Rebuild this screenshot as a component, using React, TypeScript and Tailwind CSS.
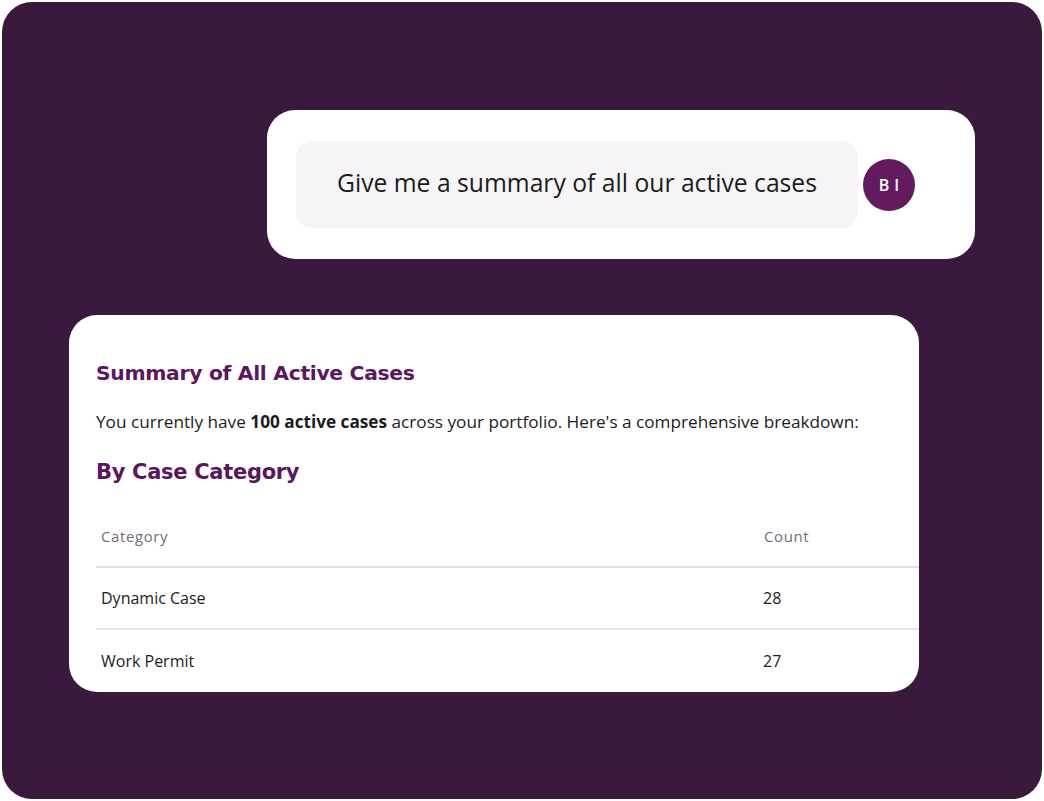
import React from 'react'

const rows = [
  { category: 'Dynamic Case', count: 28 },
  { category: 'Work Permit', count: 27 },
]

const heading = { fontFamily: '"DejaVu Sans", sans-serif' }

export default function App() {
  return (
    <div className="w-[1044px] h-[801px] bg-white p-[2px]" style={{ fontFamily: '"Open Sans", "Noto Sans", sans-serif' }}>
      <div className="w-full h-full rounded-[30px] bg-[#3a1a3c] overflow-hidden pt-[108px] pl-[67px]">
        {/* user prompt */}
        <div className="ml-[198px] w-[708px] h-[149px] bg-white rounded-[28px] flex items-center pl-[29px] pr-[59px]">
          <div className="w-[562px] h-[87px] rounded-[16px] bg-[#f6f4f7] flex items-center justify-center pb-[3px] text-[24.7px] text-[#1c1c1c]">
            Give me a summary of all our active cases
          </div>
          <div className="ml-[5px] w-[52px] h-[52px] rounded-full bg-[#641a5f] text-white text-[16px] font-semibold flex items-center justify-center tracking-[5px] pl-[5px]">
            BI
          </div>
        </div>

        {/* assistant answer */}
        <div className="mt-[56px] w-[850px] h-[377px] bg-white rounded-[28px] overflow-hidden pl-[27px] pt-[43px]">
          <h2 className="text-[20.3px] font-bold text-[#5c1660] leading-[30px] tracking-[-0.3px]" style={heading}>
            Summary of All Active Cases
          </h2>
          <p className="mt-[22px] text-[17.2px] text-[#1c1c1c] leading-[24px]">
            You currently have <strong className="font-bold">100 active cases</strong> across your portfolio. Here's a comprehensive breakdown:
          </p>
          <h3 className="mt-[23px] text-[21px] font-bold text-[#5c1660] leading-[30px] tracking-[-0.3px]" style={heading}>
            By Case Category
          </h3>
          <div className="mt-[14px] w-[860px]">
            <div className="h-[67px] pt-[25px] flex border-b-2 border-[#e2dde4] text-[15px] leading-[20px] text-[#766a7c] tracking-[0.6px]">
              <div className="pl-[5px] w-[667px]">Category</div>
              <div className="pl-[1px]">Count</div>
            </div>
            {rows.map((r, i) => (
              <div
                key={r.category}
                className={'h-[62px] flex items-center text-[16px] text-[#1c1c1c] ' + (i < rows.length - 1 ? 'border-b-2 border-[#e7e3e8]' : '')}
              >
                <div className="pl-[5px] w-[667px]">{r.category}</div>
                <div>{r.count}</div>
              </div>
            ))}
          </div>
        </div>
      </div>
    </div>
  )
}
